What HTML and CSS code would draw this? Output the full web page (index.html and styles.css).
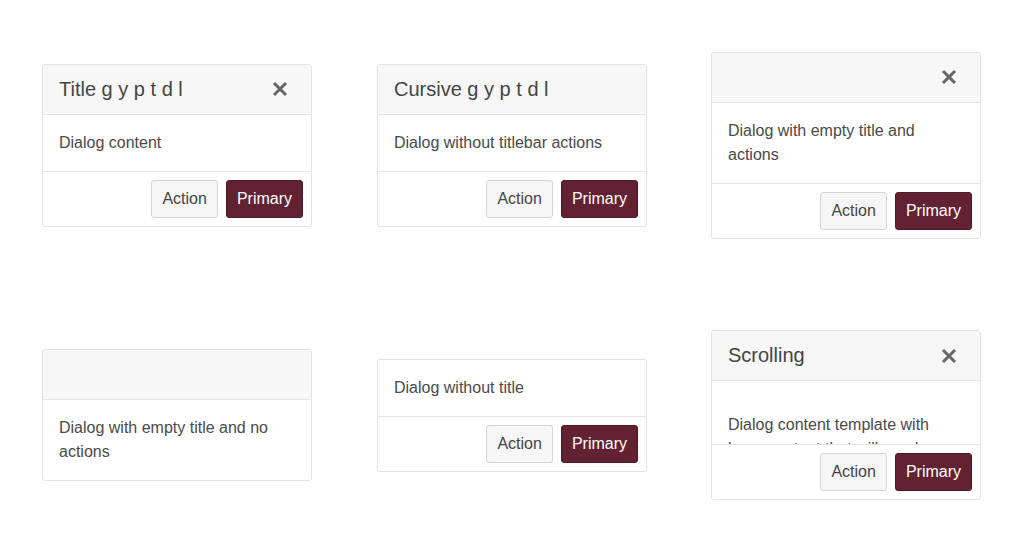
FILE: index.html
```html
<!DOCTYPE html>
<html>
<head>
<meta charset="utf-8">
<link rel="stylesheet" href="styles.css">
</head>
<body>
<div class="grid">
  <div class="dialog">
    <div class="header"><span class="title">Title g y p t d l</span><span class="close"><svg width="16" height="16" viewBox="0 0 16 16"><path d="M2 2L14 14M14 2L2 14" stroke="#666" stroke-width="3"/></svg></span></div>
    <div class="body">Dialog content</div>
    <div class="footer"><button class="btn">Action</button><button class="btn primary">Primary</button></div>
  </div>
  <div class="dialog">
    <div class="header"><span class="title">Cursive g y p t d l</span></div>
    <div class="body">Dialog without titlebar actions</div>
    <div class="footer"><button class="btn">Action</button><button class="btn primary">Primary</button></div>
  </div>
  <div class="dialog">
    <div class="header"><span class="title"></span><span class="close"><svg width="16" height="16" viewBox="0 0 16 16"><path d="M2 2L14 14M14 2L2 14" stroke="#666" stroke-width="3"/></svg></span></div>
    <div class="body">Dialog with empty title and actions</div>
    <div class="footer"><button class="btn">Action</button><button class="btn primary">Primary</button></div>
  </div>
  <div class="dialog">
    <div class="header"><span class="title"></span></div>
    <div class="body">Dialog with empty title and no actions</div>
  </div>
  <div class="dialog">
    <div class="body">Dialog without title</div>
    <div class="footer"><button class="btn">Action</button><button class="btn primary">Primary</button></div>
  </div>
  <div class="dialog">
    <div class="header"><span class="title">Scrolling</span><span class="close"><svg width="16" height="16" viewBox="0 0 16 16"><path d="M2 2L14 14M14 2L2 14" stroke="#666" stroke-width="3"/></svg></span></div>
    <div class="body scroll">Dialog content template with large content that will need scrolling in the dialog body</div>
    <div class="footer"><button class="btn">Action</button><button class="btn primary">Primary</button></div>
  </div>
</div>
</body>
</html>
```
FILE: styles.css
```css
html, body {
  margin: 0;
  padding: 0;
  background: #fff;
  font-family: "Liberation Sans", Arial, sans-serif;
}
.grid {
  display: grid;
  grid-template-columns: 335px 334px 270px;
  grid-template-rows: 270px 270px;
  padding: 10px 0 0 42px;
  align-items: center;
}
.dialog {
  width: 270px;
  box-sizing: border-box;
  border: 1px solid #e3e3e3;
  border-radius: 3px;
  background: #fff;
  overflow: hidden;
}
.header {
  height: 49px;
  background: #f7f7f7;
  border-bottom: 1px solid #e5e5e5;
  display: flex;
  align-items: center;
  justify-content: space-between;
  padding: 0 23px 0 16px;
}
.title {
  font-size: 20px;
  color: #444;
}
.close {
  display: flex;
  width: 16px;
  height: 16px;
}
.body {
  padding: 16px;
  font-size: 16px;
  line-height: 24px;
  color: #4a4a4a;
}
.body.scroll {
  padding: 32px 16px 0;
  height: 31px;
  overflow: hidden;
}
.footer {
  border-top: 1px solid #e5e5e5;
  padding: 8px;
  display: flex;
  justify-content: flex-end;
  gap: 8px;
}
.btn {
  font-family: "Liberation Sans", Arial, sans-serif;
  font-size: 16px;
  line-height: 24px;
  padding: 6px 10px;
  border: 1px solid #d5d5d5;
  border-radius: 3px;
  background: #f6f6f6;
  color: #444;
}
.btn.primary {
  background: #622232;
  border-color: #4e1a27;
  color: #fff;
}
```
